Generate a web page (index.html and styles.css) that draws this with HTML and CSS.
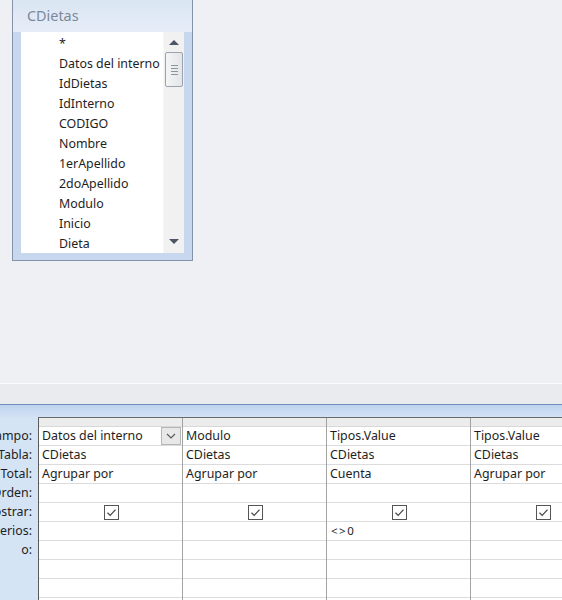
FILE: index.html
```html
<!DOCTYPE html>
<html lang="es">
<head>
<meta charset="utf-8">
<title>Consulta CDietas</title>
<link rel="stylesheet" href="styles.css">
</head>
<body>
<div class="page">
  <div class="top">
    <div class="tablebox">
      <div class="tb-head">CDietas</div>
      <div class="tb-frame">
        <ul class="tb-list">
          <li>*</li>
          <li>Datos del interno</li>
          <li>IdDietas</li>
          <li>IdInterno</li>
          <li>CODIGO</li>
          <li>Nombre</li>
          <li>1erApellido</li>
          <li>2doApellido</li>
          <li>Modulo</li>
          <li>Inicio</li>
          <li>Dieta</li>
        </ul>
        <div class="vscroll">
          <div class="arrow up"></div>
          <div class="track">
            <div class="thumb"><span></span><span></span><span></span><span></span></div>
          </div>
          <div class="arrow down"></div>
        </div>
      </div>
    </div>
  </div>
  <div class="splitter"></div>
  <div class="band"></div>
  <div class="lower">
    <div class="labels">
      <div class="lbl-head"></div>
      <div class="lbl">Campo:</div>
      <div class="lbl">Tabla:</div>
      <div class="lbl">Total:</div>
      <div class="lbl">Orden:</div>
      <div class="lbl">Mostrar:</div>
      <div class="lbl">Criterios:</div>
      <div class="lbl">o:</div>
    </div>
    <div class="grid">
      <div class="col">
        <div class="selector"></div>
        <div class="cell field">Datos del interno<span class="dd"><svg width="10" height="6" viewBox="0 0 10 6"><path d="M1 1 L5 5 L9 1" fill="none" stroke="#555" stroke-width="1.1"/></svg></span></div>
        <div class="cell">CDietas</div>
        <div class="cell">Agrupar por</div>
        <div class="cell"></div>
        <div class="cell chk"><span class="box"><svg width="13" height="13" viewBox="0 0 13 13"><path d="M2.5 6.8 L5.2 9.4 L10.5 3.6" fill="none" stroke="#4a4a4a" stroke-width="1.3"/></svg></span></div>
        <div class="cell"></div>
        <div class="cell"></div>
        <div class="cell"></div>
        <div class="cell"></div>
      </div>
      <div class="col">
        <div class="selector"></div>
        <div class="cell">Modulo</div>
        <div class="cell">CDietas</div>
        <div class="cell">Agrupar por</div>
        <div class="cell"></div>
        <div class="cell chk"><span class="box"><svg width="13" height="13" viewBox="0 0 13 13"><path d="M2.5 6.8 L5.2 9.4 L10.5 3.6" fill="none" stroke="#4a4a4a" stroke-width="1.3"/></svg></span></div>
        <div class="cell"></div>
        <div class="cell"></div>
        <div class="cell"></div>
        <div class="cell"></div>
      </div>
      <div class="col">
        <div class="selector"></div>
        <div class="cell">Tipos.Value</div>
        <div class="cell">CDietas</div>
        <div class="cell">Cuenta</div>
        <div class="cell"></div>
        <div class="cell chk"><span class="box"><svg width="13" height="13" viewBox="0 0 13 13"><path d="M2.5 6.8 L5.2 9.4 L10.5 3.6" fill="none" stroke="#4a4a4a" stroke-width="1.3"/></svg></span></div>
        <div class="cell crit">&lt;&gt;0</div>
        <div class="cell"></div>
        <div class="cell"></div>
        <div class="cell"></div>
      </div>
      <div class="col">
        <div class="selector"></div>
        <div class="cell">Tipos.Value</div>
        <div class="cell">CDietas</div>
        <div class="cell">Agrupar por</div>
        <div class="cell"></div>
        <div class="cell chk"><span class="box"><svg width="13" height="13" viewBox="0 0 13 13"><path d="M2.5 6.8 L5.2 9.4 L10.5 3.6" fill="none" stroke="#4a4a4a" stroke-width="1.3"/></svg></span></div>
        <div class="cell"></div>
        <div class="cell"></div>
        <div class="cell"></div>
        <div class="cell"></div>
      </div>
    </div>
  </div>
</div>
</body>
</html>
```
FILE: styles.css
```css
* { box-sizing: border-box; }
html, body { margin: 0; padding: 0; }
body {
  font-family: "Noto Sans", "Open Sans", sans-serif;
  font-size: 12.4px;
  color: #1e1e1e;
}
.page {
  width: 562px;
  height: 600px;
  overflow: hidden;
  background: #eef0f3;
}
.top {
  height: 383px;
  padding-left: 12px;
}
.tablebox {
  width: 181px;
  border: 1px solid #8593a8;
  border-top: none;
  background: #c9d9ef;
}
.tb-head {
  height: 32px;
  padding: 7px 0 0 14px;
  font-size: 14.4px;
  line-height: 18px;
  color: #7b889a;
  background: linear-gradient(#dae5f3, #e6edf7);
}
.tb-frame {
  display: flex;
  padding: 0 8px 7px 8px;
  background: #c6d7ee;
}
.tb-list {
  list-style: none;
  margin: 0;
  padding: 2px 0 0 0;
  width: 142px;
  height: 221px;
  background: #fff;
  overflow: hidden;
}
.tb-list li {
  height: 20px;
  line-height: 20px;
  padding-left: 38px;
  white-space: nowrap;
}
.vscroll {
  width: 21px;
  height: 221px;
  background: #f1f1f1;
  display: flex;
  flex-direction: column;
  align-items: center;
  border-left: 1px solid #f7f7f7;
}
.arrow {
  width: 0;
  height: 0;
  border-left: 5px solid transparent;
  border-right: 5px solid transparent;
}
.arrow.up {
  margin-top: 8px;
  border-bottom: 5px solid #4d5666;
}
.arrow.down {
  margin-bottom: 9px;
  border-top: 5px solid #4d5666;
}
.track {
  flex: 1;
  width: 100%;
  padding: 7px 1px 0 1px;
}
.thumb {
  height: 35px;
  border: 1px solid #9aa3ad;
  border-radius: 2px;
  background: linear-gradient(90deg, #f4f5f6, #e3e5e8);
  display: flex;
  flex-direction: column;
  align-items: center;
  justify-content: center;
  gap: 2px;
}
.thumb span {
  display: block;
  width: 7px;
  height: 1px;
  background: #8d949c;
}
.splitter {
  height: 21px;
  border-top: 1px solid #fbfbfc;
  background: #e9ebee;
}
.band {
  height: 13px;
  border-top: 1px solid #6f8fb8;
  background: linear-gradient(#bfd4ef, #d2e2f5);
}
.lower {
  display: flex;
  height: 183px;
}
.labels {
  width: 38px;
  flex: none;
  background: #d5e4f5;
  overflow: hidden;
  display: flex;
  flex-direction: column;
  align-items: flex-end;
}
.lbl-head { height: 10px; }
.lbl {
  height: 19px;
  line-height: 18px;
  padding-right: 6px;
  white-space: nowrap;
  text-align: right;
}
.grid {
  flex: 1;
  display: flex;
  border-left: 1px solid #5b5b5b;
  border-top: 1px solid #6b6b6b;
  background: #fff;
  overflow: hidden;
}
.col {
  width: 144px;
  flex: none;
  border-right: 1px solid #a3a3a3;
}
.selector {
  height: 9px;
  background: #ececec;
  border-bottom: 1px solid #d8d8d8;
}
.cell {
  height: 19px;
  line-height: 18px;
  padding-left: 3px;
  border-bottom: 1px solid #dcdcdc;
  white-space: nowrap;
  position: relative;
}
.cell.field { padding-right: 22px; }
.dd {
  position: absolute;
  right: 1px;
  top: 0;
  width: 20px;
  height: 18px;
  border: 1px solid #b5b5b5;
  background: #e8e8e8;
  display: flex;
  align-items: center;
  justify-content: center;
}
.cell.chk {
  display: flex;
  align-items: center;
  justify-content: center;
  padding-left: 1px;
}
.box {
  width: 15px;
  height: 15px;
  border: 1px solid #555;
  background: #fff;
  display: flex;
  align-items: center;
  justify-content: center;
}
.cell.crit { padding-left: 4px; letter-spacing: 1.5px; font-size: 11.5px; }
```
